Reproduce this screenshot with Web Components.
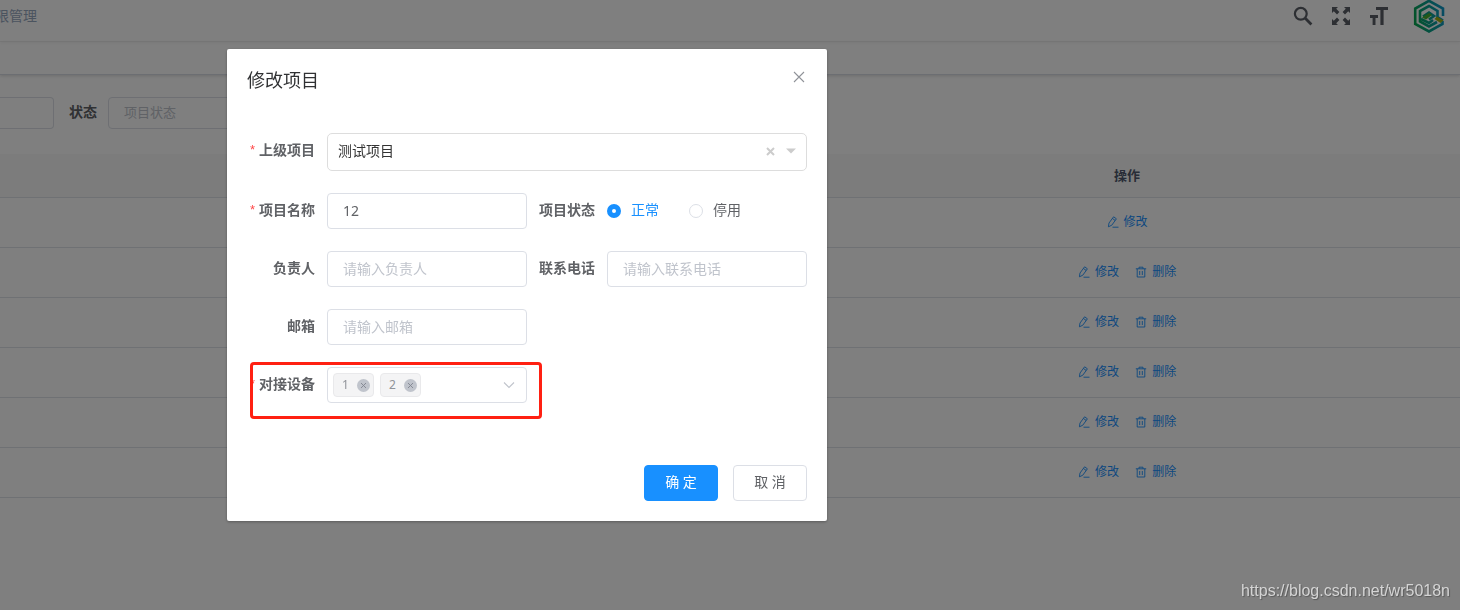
<!DOCTYPE html>
<html lang="zh-CN">
<head>
<meta charset="utf-8">
<title>项目管理</title>
<style>
  body {
    margin: 0;
    background: #fff;
    color: #606266;
    font: 14px/20px "Noto Sans", "Noto Sans CJK SC", sans-serif;
  }
</style>
</head>
<body>
<admin-page></admin-page>

<template id="ui-icon">
  <style>
    :host { display: inline-flex; flex: none; width: 12px; height: 12px; }
    svg { width: 100%; height: 100%; display: block; }
  </style>
  <svg aria-hidden="true"></svg>
</template>

<template id="nav-bar">
  <style>
    :host { display: flex; justify-content: space-between; height: 41px; border-bottom: 1px solid #f0f0f0; box-shadow: 0 1px 3px rgba(0, 21, 41, .06); }
    .crumb { display: flex; justify-content: flex-end; width: 37px; line-height: 32px; white-space: nowrap; color: #97a8be; }
    .tools { display: flex; align-items: center; gap: 18px; height: 32px; padding-right: 14px; color: #5a5e66; }
    button { display: flex; padding: 0; border: 0; background: none; color: inherit; }
    .tool { width: 20px; height: 20px; }
    .logo { width: 34px; height: 34px; }
    .avatar { margin-left: 5px; }
  </style>
  <nav class="crumb"><span>限管理</span></nav>
  <div class="tools">
    <button aria-label="搜索"><ui-icon class="tool" name="search"></ui-icon></button>
    <button aria-label="全屏"><ui-icon class="tool" name="full"></ui-icon></button>
    <button aria-label="字号"><ui-icon class="tool" name="size"></ui-icon></button>
    <button class="avatar" aria-label="用户"><ui-icon class="logo" name="logo"></ui-icon></button>
  </div>
</template>

<template id="tags-bar">
  <style>
    :host { display: block; height: 32px; border-bottom: 1px solid #d8dce5; box-shadow: 0 1px 3px rgba(0, 0, 0, .15); }
  </style>
</template>

<template id="filter-bar">
  <style>
    :host { display: flex; align-items: center; padding: 22px 0 25px; }
    input { box-sizing: border-box; height: 32px; margin: 0; padding: 0 15px 2px; border: 1px solid #dcdfe6; border-radius: 4px; background: #fff; font: inherit; font-size: 13px; color: #606266; }
    input::placeholder { color: #c0c4cc; opacity: 1; }
    .name { width: 54px; border-left: 0; border-radius: 0 4px 4px 0; }
    .state { width: 240px; }
    label { padding: 0 11px 2px 15px; font-weight: 700; }
  </style>
  <input class="name" aria-label="项目名称">
  <label for="state">状态</label>
  <input class="state" id="state" placeholder="项目状态">
</template>

<template id="project-table">
  <style>
    :host { display: block; }
    table { width: 100%; border-collapse: separate; border-spacing: 0; table-layout: fixed; }
    th, td { box-sizing: border-box; padding: 0 0 2px; border-bottom: 1px solid #dfe3e8; text-align: center; }
    th { height: 44px; background: #f8f8f9; color: #515a6e; font-size: 13px; font-weight: 700; }
    td { height: 50px; font-size: 12px; }
    .ops { width: 45.6%; }
    .links { display: flex; justify-content: center; gap: 16px; }
    a { display: flex; align-items: center; gap: 5px; color: #1890ff; text-decoration: none; }
  </style>
  <table>
    <thead><tr><th></th><th class="ops">操作</th></tr></thead>
    <tbody></tbody>
  </table>
</template>

<template id="form-item">
  <style>
    :host { position: relative; display: flex; min-height: 36px; margin-bottom: 22px; }
    .label { box-sizing: border-box; flex: none; display: flex; justify-content: flex-end; gap: 4px; width: 80px; height: 36px; padding-right: 12px; line-height: 34px; font-weight: 700; white-space: nowrap; }
    :host([required]) .label::before { content: "*"; color: #ff4949; font-family: "Liberation Sans", sans-serif; font-size: 13px; font-weight: 400; }
    .content { flex: 1; min-width: 0; display: flex; align-items: center; }
  </style>
  <div class="label"><slot name="label"></slot></div>
  <div class="content"><slot></slot></div>
  <slot name="mark"></slot>
</template>

<template id="tag-chip">
  <style>
    :host { box-sizing: border-box; display: inline-flex; align-items: center; gap: 8px; height: 24px; padding: 0 3px 0 8px; border: 1px solid #e9e9eb; border-radius: 4px; background: #f4f4f5; color: #909399; font-size: 12px; }
    button { display: flex; align-items: center; justify-content: center; width: 13px; height: 13px; padding: 0; border: 0; border-radius: 50%; background: #c0c4cc; color: #808590; }
    ui-icon { width: 9px; height: 9px; }
  </style>
  <slot></slot>
  <button type="button" aria-label="移除"><ui-icon name="close"></ui-icon></button>
</template>

<template id="edit-dialog">
  <style>
    :host { display: block; width: 600px; border-radius: 2px; background: #fff; box-shadow: 0 1px 3px rgba(0, 0, 0, .3); }
    header { display: flex; justify-content: space-between; padding: 19px 20px 11px; }
    h2 { margin: 0; font-size: 18px; line-height: 24px; font-weight: 400; color: #303133; }
    button { font: inherit; }
    .close { display: flex; width: 16px; height: 16px; padding: 0; border: 0; background: none; color: #909399; }
    .close ui-icon { width: 16px; height: 16px; }
    form { display: grid; grid-template-columns: 1fr 1fr; padding: 30px 20px 8px; }
    .wide { grid-column: 1 / -1; }
    .half { grid-column: 1; }
    input[type="text"], .box { box-sizing: border-box; width: 100%; height: 36px; margin: 0; padding: 0 15px 2px; border: 1px solid #dcdfe6; border-radius: 4px; background: #fff; color: #606266; font: inherit; }
    input::placeholder { color: #c0c4cc; opacity: 1; }
    select { flex: 1; min-width: 0; height: 100%; margin: 0; padding: 0; border: 0; outline: 0; appearance: none; background: none; font: inherit; color: inherit; }
    .box { display: flex; align-items: center; }
    .box.tree { height: 38px; gap: 10px; padding: 0 9px 2px 10px; border-color: #ddd; border-radius: 5px; color: #333; }
    .clear { display: flex; padding: 0; border: 0; background: none; color: #ccc; }
    .clear ui-icon { width: 10px; height: 10px; }
    .tree .caret { color: #ccc; width: 12px; height: 12px; }
    .box.multi { gap: 6px; padding: 0 10px 0 5px; }
    .multi .arrow { width: 14px; height: 14px; color: #c0c4cc; }
    .radio { display: flex; align-items: center; gap: 10px; margin-right: 30px; }
    .radio span { padding-bottom: 2px; }
    .radio input { box-sizing: border-box; width: 14px; height: 14px; margin: 0; border: 1px solid #dcdfe6; border-radius: 50%; appearance: none; background: #fff; }
    .radio input:checked { border: 5px solid #1890ff; }
    .radio input:checked + span { color: #1890ff; }
    .mark { position: absolute; box-sizing: border-box; inset: -5px -15px -16px 3px; border: 3px solid #ff2012; border-radius: 4px; pointer-events: none; }
    footer { display: flex; justify-content: flex-end; gap: 15px; padding: 32px 20px 20px; }
    .btn { box-sizing: border-box; min-width: 74px; height: 36px; padding: 0 20px 2px; border: 1px solid #dcdfe6; border-radius: 4px; background: #fff; color: #606266; }
    .primary { border-color: #1890ff; background: #1890ff; color: #fff; }
  </style>
  <header>
    <h2 id="title">修改项目</h2>
    <button class="close" aria-label="关闭"><ui-icon name="thin"></ui-icon></button>
  </header>
  <form id="project">
    <form-item class="wide" required>
      <label slot="label" for="parent">上级项目</label>
      <div class="box tree">
        <select id="parent"><option>测试项目</option></select>
        <button type="button" class="clear" aria-label="清除"><ui-icon name="bold"></ui-icon></button>
        <ui-icon class="caret" name="caret"></ui-icon>
      </div>
    </form-item>
    <form-item required>
      <label slot="label" for="name">项目名称</label>
      <input type="text" id="name" value="12">
    </form-item>
    <form-item>
      <span slot="label">项目状态</span>
      <label class="radio"><input type="radio" name="status" checked><span>正常</span></label>
      <label class="radio"><input type="radio" name="status"><span>停用</span></label>
    </form-item>
    <form-item>
      <label slot="label" for="leader">负责人</label>
      <input type="text" id="leader" placeholder="请输入负责人">
    </form-item>
    <form-item>
      <label slot="label" for="phone">联系电话</label>
      <input type="text" id="phone" placeholder="请输入联系电话">
    </form-item>
    <form-item class="half">
      <label slot="label" for="mail">邮箱</label>
      <input type="text" id="mail" placeholder="请输入邮箱">
    </form-item>
    <form-item class="half" required>
      <label slot="label" for="device">对接设备</label>
      <div class="box multi">
        <tag-chip>1</tag-chip>
        <tag-chip>2</tag-chip>
        <select id="device"><option value=""></option></select>
        <ui-icon class="arrow" name="down"></ui-icon>
      </div>
      <div class="mark" slot="mark"></div>
    </form-item>
  </form>
  <footer>
    <button class="btn primary" type="submit" form="project">确 定</button>
    <button class="btn" type="button">取 消</button>
  </footer>
</template>

<template id="admin-page">
  <style>
    :host { display: block; min-height: 100vh; }
    .overlay { position: fixed; inset: 0; padding: 49px 0 0 227px; background: rgba(0, 0, 0, .5); overflow: auto; }
    .watermark { position: fixed; right: 10px; bottom: 9px; font: 16px/20px "Liberation Sans", Arial, sans-serif; color: #d4d4d4; text-shadow: 1px 1px 1px rgba(0, 0, 0, .3); }
  </style>
  <nav-bar></nav-bar>
  <tags-bar></tags-bar>
  <filter-bar></filter-bar>
  <project-table></project-table>
  <div class="overlay">
    <edit-dialog role="dialog" aria-label="修改项目"></edit-dialog>
  </div>
  <span class="watermark">https://blog.csdn.net/wr5018n</span>
</template>

<script>
  const line = (d, w) => `<path d="${d}" fill="none" stroke="currentColor" stroke-width="${w}"/>`;
  const fill = d => `<path d="${d}" fill="currentColor"/>`;

  // Each entry: [viewBox size, markup]
  const ICONS = {
    search: [20, `<circle cx="7.8" cy="7.8" r="5.9" fill="none" stroke="currentColor" stroke-width="2.2"/>` + line('M12 12L18.4 18.4', 2.8)],
    full: [20, fill('M1 1H7L5.2 2.8L8.4 6L6 8.4L2.8 5.2L1 7ZM19 1V7L17.2 5.2L14 8.4L11.6 6L14.8 2.8L13 1ZM1 19V13L2.8 14.8L6 11.6L8.4 14L5.2 17.2L7 19ZM19 19H13L14.8 17.2L11.6 14L14 11.6L17.2 14.8L19 13Z')],
    size: [20, fill('M7 1H19V4H14.6V19H11.4V4H7ZM1 9H9V12H6.5V19H3.6V12H1Z')],
    logo: [34, `<defs><linearGradient id="g" gradientUnits="userSpaceOnUse" x1="2" y1="20" x2="32" y2="14"><stop offset="0" stop-color="#08a850"/><stop offset=".45" stop-color="#08a088"/><stop offset="1" stop-color="#1098c8"/></linearGradient></defs>
      <g fill="none" stroke="url(#g)" stroke-width="2.6">
      <path d="M31 17V9.5L17 1.8L3.2 9.5V25L17 32.4L30.5 25V22"/>
      <path d="M25 23L17 27.4L8 22.4V12L17 7L25.5 12V18L31 21.5"/>
      <path d="M9 20L17 24L21 21"/><path d="M11 17.5L17 13.5L22 17L17 20.5"/></g>
      <path d="M25 17.5L31.5 21.5L28.5 24L22.5 20Z" fill="#a0b010"/><path d="M10 18.5L17 14L20 16L14 20.5Z" fill="#48b030"/>`],
    edit: [12, line('M2 7L6.6 .8L9.4 2.8L4.8 9.2L1.4 10.8ZM5.4 2.4L8.2 4.5M5.5 11.2H11.5', .9)],
    trash: [12, line('M.8 2.8H11.2M4 2.8V1.2H8V2.8M2.2 2.8V11H9.8V2.8M4.7 5V9M7.3 5V9', .9)],
    thin: [16, line('M3 4L13 14M13 4L3 14', 1.1)],
    close: [9, line('M2 2L7 7M7 2L2 7', .9)],
    bold: [10, line('M2 2L9 9M9 2L2 9', 2)],
    caret: [12, fill('M1 3.5H11L6 8.5Z')],
    down: [14, line('M2 4.5L7 9.5L12 4.5', 1.1)]
  };

  const define = (name, setup) => {
    customElements.define(name, class extends HTMLElement {
      constructor() {
        super();
        this.attachShadow({ mode: 'open' }).append(document.getElementById(name).content.cloneNode(true));
      }
      connectedCallback() {
        if (setup) setup(this, this.shadowRoot);
      }
    });
  };

  define('ui-icon', (host, root) => {
    const [size, markup] = ICONS[host.getAttribute('name')];
    const svg = root.querySelector('svg');
    svg.setAttribute('viewBox', `0 0 ${size} ${size}`);
    svg.innerHTML = markup;
  });
  define('nav-bar');
  define('tags-bar');
  define('filter-bar');
  define('project-table', (host, root) => {
    const edit = '<a href="#edit"><ui-icon name="edit"></ui-icon>修改</a>';
    const remove = '<a href="#delete"><ui-icon name="trash"></ui-icon>删除</a>';
    // The root project cannot be deleted.
    root.querySelector('tbody').innerHTML = [false, true, true, true, true, true]
      .map(removable => `<tr><td></td><td><div class="links">${edit}${removable ? remove : ''}</div></td></tr>`)
      .join('');
  });
  define('form-item');
  define('tag-chip');
  define('edit-dialog');
  define('admin-page');
</script>
</body>
</html>
